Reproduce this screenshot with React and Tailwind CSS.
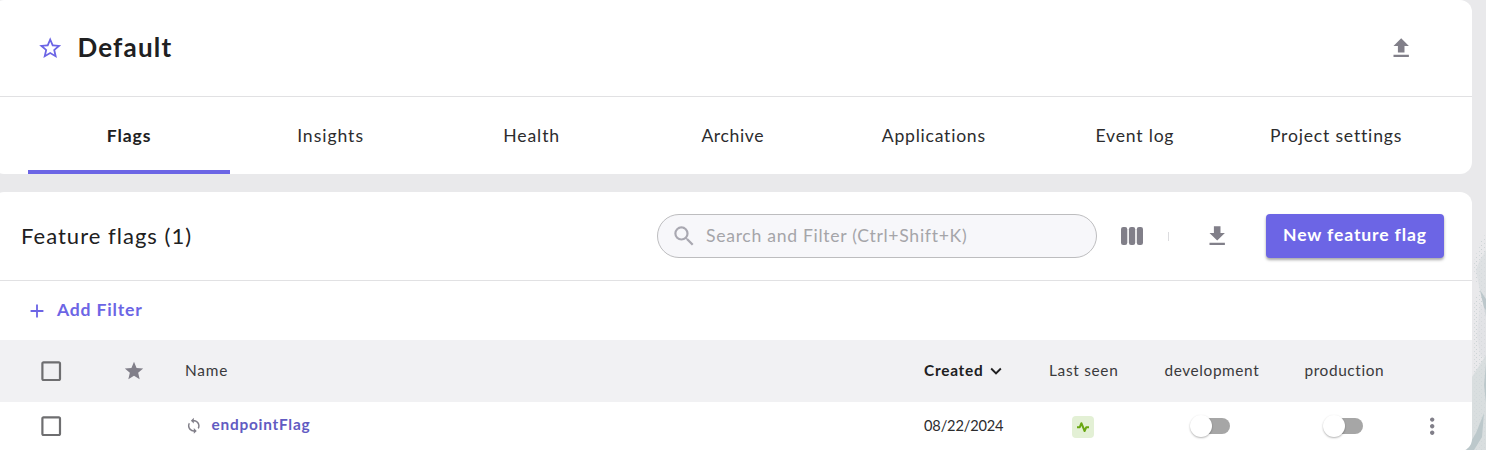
import { MdStarBorder, MdStar, MdUpload, MdDownload, MdSearch, MdAdd, MdLoop, MdCheckBoxOutlineBlank, MdMoreVert, MdKeyboardArrowDown } from "react-icons/md";

const tabs = [
  { label: "Flags", style: "font-bold tracking-[0.9px] border-[#6c65e5]" },
  { label: "Insights", style: "tracking-[0.95px] border-transparent text-[#2c2c2e]" },
  { label: "Health", style: "tracking-[0.9px] border-transparent text-[#2c2c2e]" },
  { label: "Archive", style: "tracking-[0.6px] border-transparent text-[#2c2c2e]" },
  { label: "Applications", style: "tracking-[0.75px] border-transparent text-[#2c2c2e]" },
  { label: "Event log", style: "tracking-[0.8px] border-transparent text-[#2c2c2e]" },
  { label: "Project settings", style: "tracking-[0.8px] border-transparent text-[#2c2c2e]" },
];

function ColumnsIcon() {
  return (
    <svg className="block h-[18px] w-[22px]" viewBox="0 0 22 18" fill="#817f89">
      <rect x="0" width="6.3" height="18" rx="2.2" />
      <rect x="7.9" width="6.3" height="18" rx="2.2" />
      <rect x="15.8" width="6.2" height="18" rx="2.2" />
    </svg>
  );
}

function Toggle() {
  return (
    <div className="flex h-[22px] w-[40px] items-center">
      <div className="z-10 size-[22px] shrink-0 rounded-full bg-white shadow-[0_1px_2px_rgba(0,0,0,0.3)]" />
      <div className="-ml-[18px] h-4 w-9 shrink-0 rounded-full bg-[#a6a6a6]" />
    </div>
  );
}

function Backdrop() {
  return (
    <svg className="absolute top-[225px] right-0 h-[225px] w-[30px]" viewBox="0 0 30 225">
      <defs>
        <pattern id="dots" width="5" height="4" patternUnits="userSpaceOnUse">
          <rect width="1" height="1" fill="#ccd3d5" />
          <rect x="3" y="2" width="1" height="1" fill="#d2d8da" />
        </pattern>
      </defs>
      <path d="M17 40 23 20 30 8V225H16V85L22 65Z" fill="url(#dots)" />
      <path d="M20 45 24 35 30 25V88L24 66Z" fill="#d9dddf" opacity=".7" />
      <path d="M24 65 30 92V74Z" fill="#bcc7cb" />
      <path d="M30 85 24 78 21 110 24 130 30 135Z" fill="#dde0e2" opacity=".6" />
      <path d="M30 130 16 152V225H30Z" fill="#d3d9db" opacity=".75" />
      <path d="M30 138 28 160 30 178ZM28 188 20 208 10 225H18L26 212Z" fill="#bcc8cb" />
    </svg>
  );
}

export default function App() {
  return (
    <div className="relative h-[450px] w-[1486px] overflow-hidden bg-[#e9e9eb] font-['Lato',sans-serif] text-[#202021]">
      <Backdrop />
      <main className="relative -ml-2 flex w-[1480px] flex-col gap-[18px]">
        <section className="h-[174px] overflow-hidden rounded-xl bg-white">
          <header className="flex h-[97px] items-center justify-between border-b border-[#e1e1e3] pr-[58px] pl-[45px]">
            <div className="flex items-center gap-[14px]">
              <MdStarBorder className="size-[26.4px] text-[#6c65e5]" />
              <h1 className="pb-0.5 text-[26px] leading-8 font-bold tracking-[1.2px]">Default</h1>
            </div>
            <MdUpload className="size-[26.4px] text-[#817f89]" />
          </header>
          <nav className="flex h-[77px] pl-9">
            {tabs.map((t) => (
              <div key={t.label} className={`flex w-[201.1px] items-center justify-center border-b-4 pt-[5px] text-[17.6px] first:w-[202px] ${t.style}`}>
                {t.label}
              </div>
            ))}
          </nav>
        </section>

        <section className="h-[259px] overflow-hidden rounded-xl bg-white">
          <header className="flex h-[89px] items-center border-b border-[#e1e1e3] pr-7 pl-[29px]">
            <h2 className="pb-0.5 text-[22px] tracking-[1.02px]">Feature flags (1)</h2>
            <div className="ml-auto flex h-11 w-[440px] items-center gap-[9px] rounded-full border border-[#bdbdbf] bg-[#f7f7fa] pl-[13px]">
              <MdSearch className="size-[26.4px] text-[#a9a8b1]" />
              <span className="text-[17.6px] tracking-[0.7px] text-[#a5a5a9]">Search and Filter (Ctrl+Shift+K)</span>
            </div>
            <div className="ml-6"><ColumnsIcon /></div>
            <div className="ml-[25px] h-[9px] w-px bg-[#dcdcdf]" />
            <MdDownload className="ml-[35px] size-[26.4px] text-[#817f89]" />
            <button className="ml-9 h-11 w-[178px] rounded-[4px] bg-[#6c65e5] pb-px text-[17.6px] font-bold tracking-[0.85px] text-white shadow-[0_2px_3px_rgba(0,0,0,0.35)]">
              New feature flag
            </button>
          </header>
          <div className="flex h-[59px] items-center gap-[9px] pl-[34px] text-[#6c65e5]">
            <MdAdd className="size-[22px]" />
            <span className="text-[17.6px] font-bold tracking-[0.8px]">Add Filter</span>
          </div>
          <div className="grid h-[62px] grid-cols-[193px_739px_125px_115.5px_140px_167px] items-center bg-[#f1f1f3] text-[15.4px] text-[#3a3a3c]">
            <div className="flex items-center pl-[46px]">
              <MdCheckBoxOutlineBlank className="size-[26.4px] text-[#6e6e70]" />
              <MdStar className="ml-[59px] size-[22px] text-[#817f89]" />
            </div>
            <span className="tracking-[0.8px]">Name</span>
            <div className="flex items-center gap-0.5 font-bold text-[#202021]">
              <span className="tracking-[0.75px]">Created</span>
              <MdKeyboardArrowDown className="size-[22px]" />
            </div>
            <span className="tracking-[0.7px]">Last seen</span>
            <span className="tracking-[0.6px]">development</span>
            <span className="tracking-[0.6px]">production</span>
          </div>
          <div className="grid h-[47px] grid-cols-[193px_739px_148px_118px_132.5px_96.5px_50px] items-center text-[15.4px]">
            <div className="pt-0.5 pl-[46px]">
              <MdCheckBoxOutlineBlank className="size-[26.4px] text-[#6e6e70]" />
            </div>
            <div className="flex items-center gap-2">
              <MdLoop className="size-[17.6px] text-[#817f89]" />
              <span className="pb-px pl-px font-bold tracking-[0.75px] text-[#615bc2]">endpointFlag</span>
            </div>
            <span className="text-[14.6px] tracking-[-0.15px] text-[#2c2c2e]">08/22/2024</span>
            <div className="mt-0.5 flex size-[22px] items-center justify-center rounded-[4px] bg-[#e3f0d5]">
              <svg className="size-4" viewBox="0 0 16 16" fill="none" stroke="#68a611" strokeWidth="2" strokeLinejoin="round">
                <path d="M2 8.2h2.8L6.4 4.2l3.2 7.8L11.3 8.2H14" />
              </svg>
            </div>
            <Toggle />
            <Toggle />
            <MdMoreVert className="mt-0.5 size-[26.4px] text-[#817f89]" />
          </div>
        </section>
      </main>
    </div>
  );
}
